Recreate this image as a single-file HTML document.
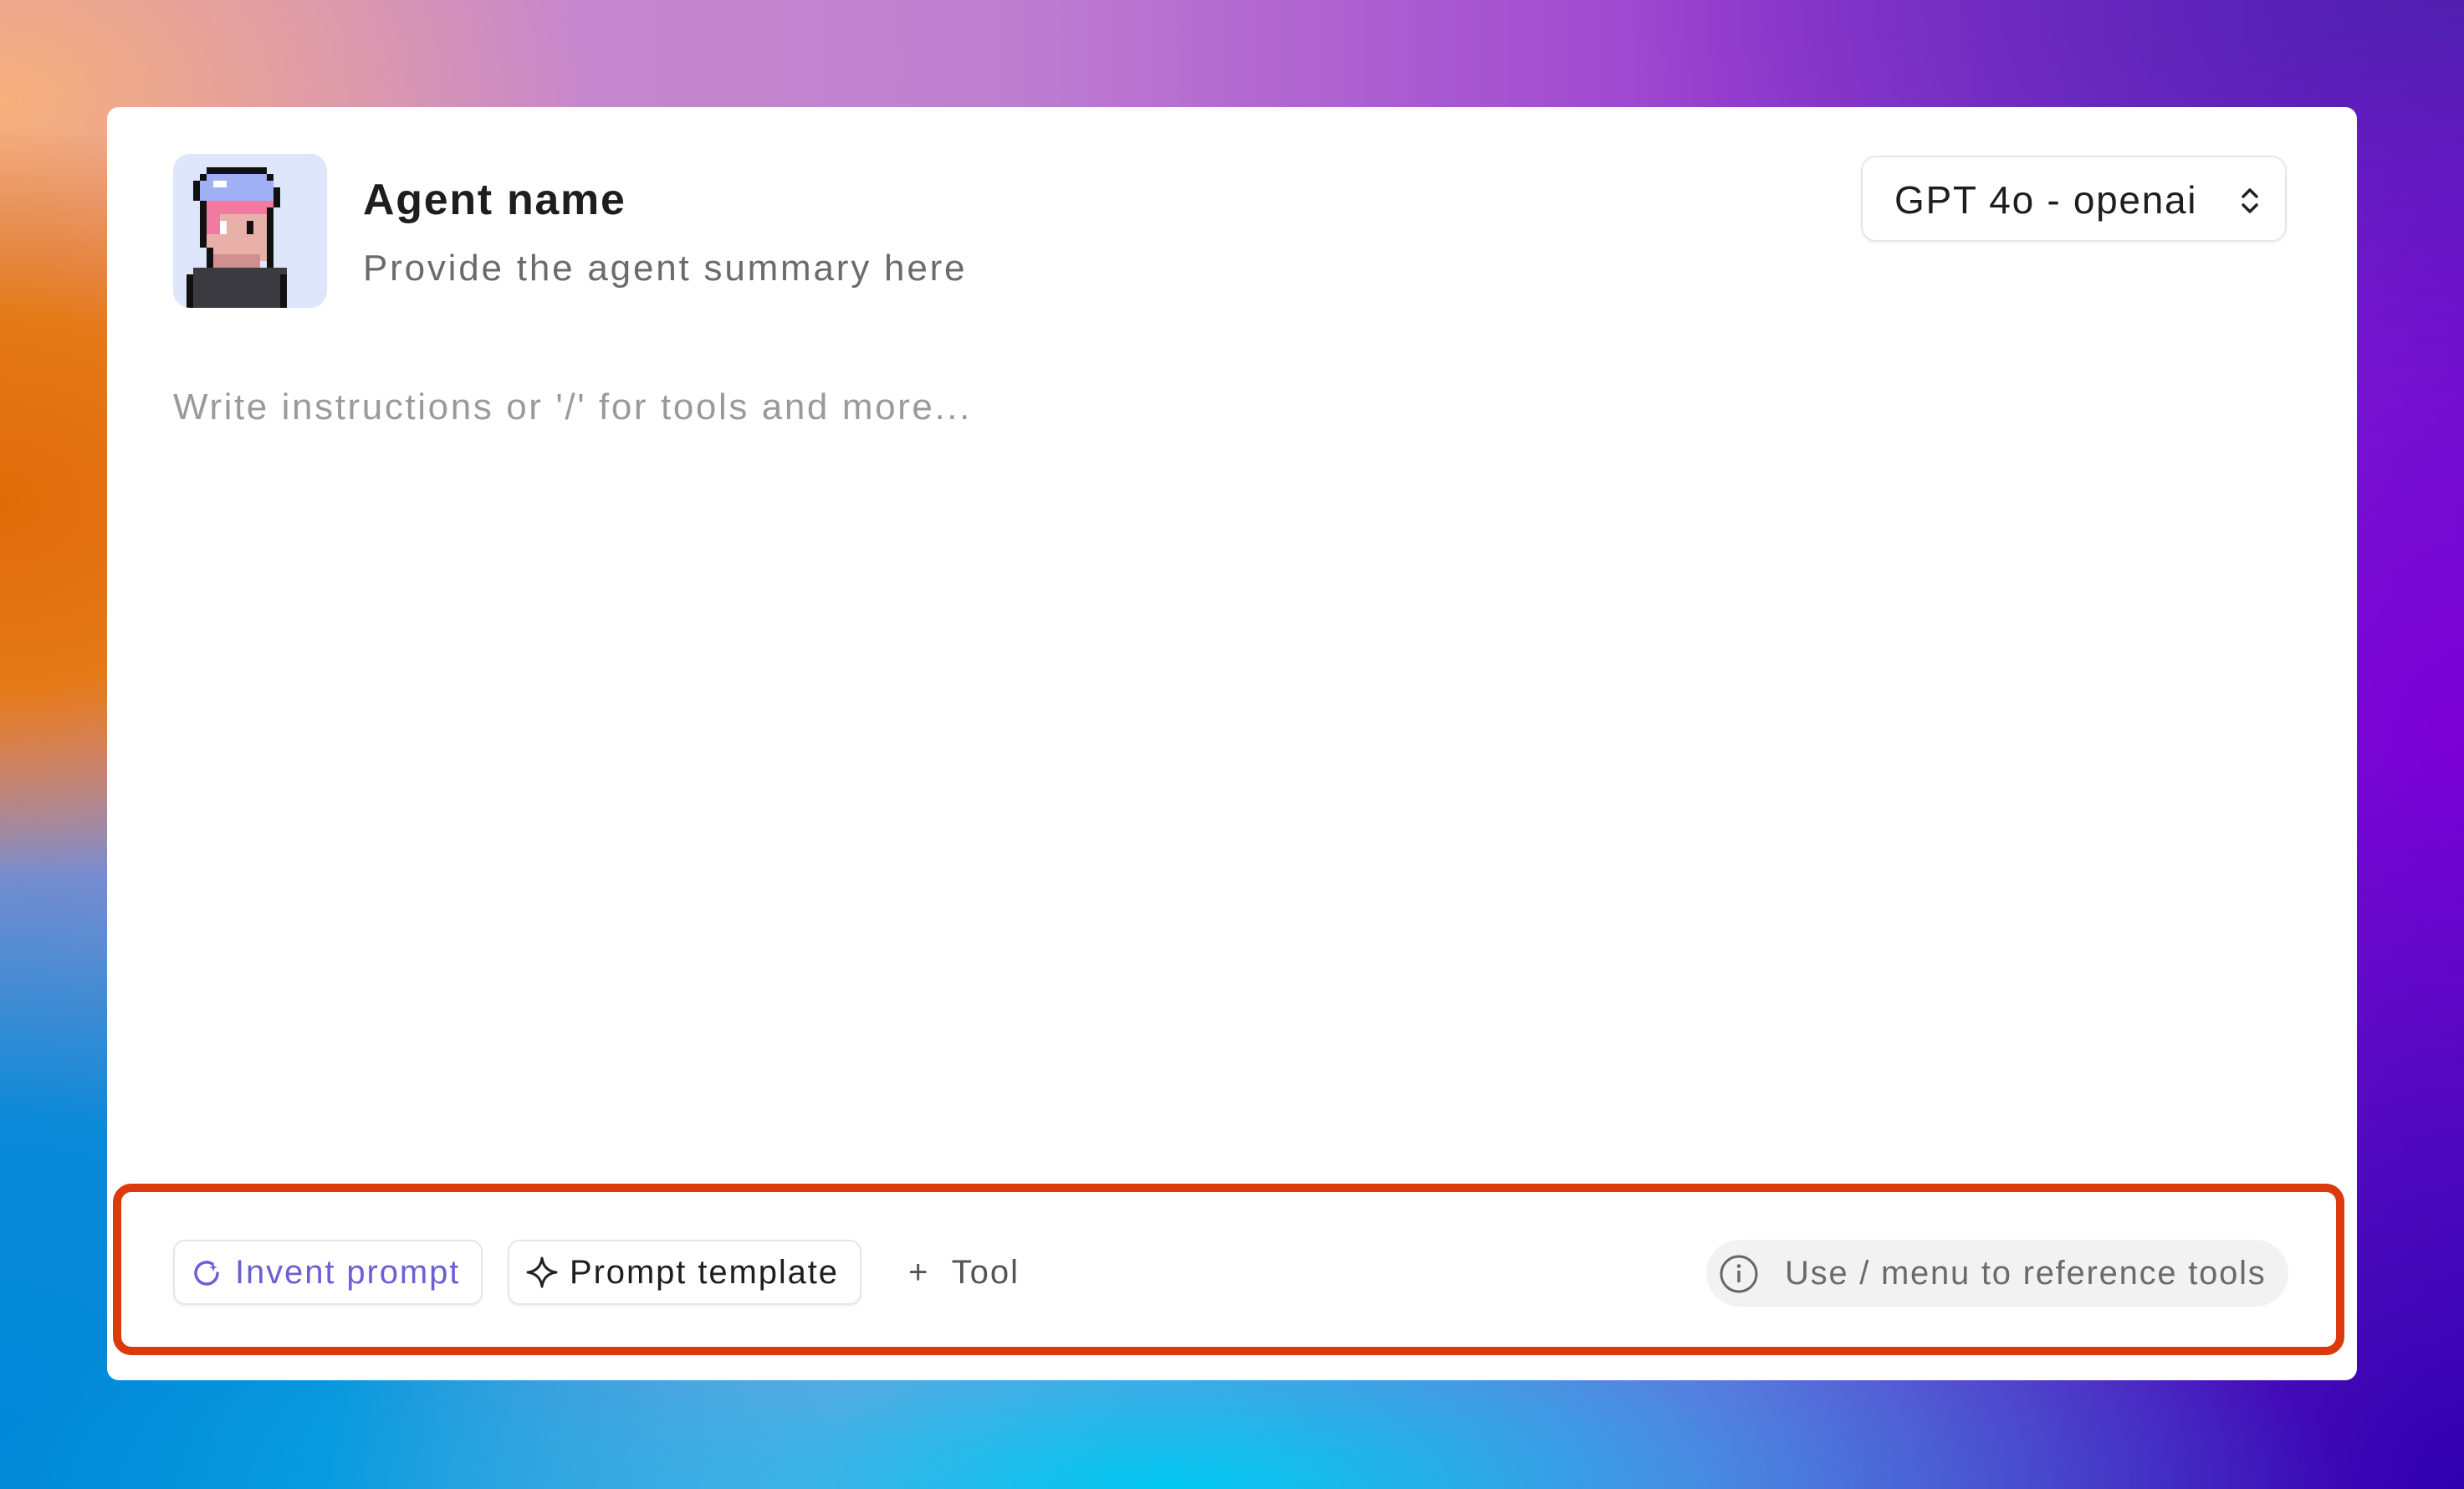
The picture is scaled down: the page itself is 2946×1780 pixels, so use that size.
<!DOCTYPE html>
<html><head><meta charset="utf-8"><style>
html,body{margin:0;padding:0}
body{width:2946px;height:1780px;position:relative;overflow:hidden;font-family:"Liberation Sans",sans-serif;
background:
radial-gradient(ellipse 600px 450px at 0px 600px,#e06a08 0%,#e57a18 50%,rgba(232,122,16,0) 100%),
radial-gradient(ellipse 700px 500px at 0px 120px,#f7b07a 0%,rgba(247,176,122,0) 100%),
radial-gradient(ellipse 1400px 400px at 1400px 1780px,#00c8f0 0%,rgba(0,200,240,0) 100%),
radial-gradient(ellipse 1000px 900px at 0px 1700px,#0088d8 0%,#0a8ad8 40%,rgba(0,136,216,0) 100%),
radial-gradient(ellipse 900px 900px at 2946px 1780px,#3000b0 0%,rgba(48,0,176,0) 100%),
radial-gradient(ellipse 700px 900px at 2946px 900px,#7c00d8 0%,rgba(124,0,216,0) 100%),
radial-gradient(ellipse 1000px 500px at 2946px 0px,#5020b0 0%,rgba(80,32,176,0) 100%),
linear-gradient(90deg,#d090c8 0%,#c080d0 40%,#9a40d0 70%,#6a20c8 100%);}
.card{position:absolute;left:128px;top:128px;width:2690px;height:1522px;background:#fff;border-radius:14px}
.av{position:absolute;left:207px;top:184px;width:184px;height:184px;background:#dde6fb;border-radius:20px;overflow:hidden}
.t1{position:absolute;left:434px;top:209px;font-size:52px;font-weight:bold;color:#1e1e1e;letter-spacing:1.7px}
.t2{position:absolute;left:434px;top:296px;font-size:44px;color:#6b6b6b;letter-spacing:2.8px}
.ph{position:absolute;left:207px;top:462px;font-size:44px;color:#9a9a9a;letter-spacing:2.6px}
.dd{position:absolute;left:2225px;top:186px;width:509px;height:103px;border:2px solid #e6e6e6;border-radius:18px;box-sizing:border-box;box-shadow:0 2px 3px rgba(0,0,0,.05)}
.dd span{position:absolute;left:38px;top:24px;font-size:46px;color:#1e1e1e;letter-spacing:1.7px}
.red{position:absolute;left:135px;top:1415px;width:2668px;height:205px;border:10px solid #dc3a0c;border-radius:22px;box-sizing:border-box}
.btn{position:absolute;top:1482px;height:78px;border:2px solid #e6e6e6;border-radius:14px;box-sizing:border-box;font-size:40px;line-height:74px;box-shadow:0 2px 3px rgba(0,0,0,.05);letter-spacing:1.9px}
.pill{position:absolute;left:2040px;top:1482px;width:696px;height:80px;background:#f2f2f2;border-radius:40px;font-size:40px;line-height:80px;color:#6b6b6b;letter-spacing:1.75px}
</style></head><body>
<div class="card"></div>
<div class="av"><svg width="184" height="184" viewBox="0 0 23 23" shape-rendering="crispEdges">
<rect x="5" y="2" width="9" height="1" fill="#111"/>
<rect x="4" y="3" width="1" height="1" fill="#111"/><rect x="14" y="3" width="1" height="2" fill="#111"/>
<rect x="3" y="4" width="1" height="3" fill="#111"/><rect x="15" y="5" width="1" height="3" fill="#111"/>
<rect x="5" y="3" width="9" height="3" fill="#9fb0f5"/><rect x="4" y="4" width="11" height="3" fill="#9fb0f5"/>
<rect x="6" y="4" width="2" height="1" fill="#fff"/>
<rect x="4" y="7" width="11" height="2" fill="#f07aa0"/>
<rect x="4" y="7" width="1" height="7" fill="#111"/><rect x="14" y="8" width="1" height="10" fill="#111"/>
<rect x="5" y="9" width="9" height="7" fill="#e8b0a8"/>
<rect x="5" y="9" width="2" height="3" fill="#f07aa0"/>
<rect x="7" y="10" width="1" height="2" fill="#fff"/><rect x="11" y="10" width="1" height="2" fill="#111"/>
<rect x="5" y="14" width="1" height="4" fill="#111"/>
<rect x="3" y="17" width="14" height="6" fill="#3a3a40"/>
<rect x="2" y="18" width="1" height="5" fill="#111"/><rect x="16" y="18" width="1" height="5" fill="#111"/>
<rect x="6" y="15" width="7" height="2" fill="#d09090"/>
</svg></div>
<div class="t1">Agent name</div>
<div class="t2">Provide the agent summary here</div>
<div class="ph">Write instructions or '/' for tools and more...</div>
<div class="dd"><span>GPT 4o - openai</span>
<svg style="position:absolute;left:448px;top:32px" width="30" height="40" viewBox="0 0 30 40"><path d="M7 15 L15 7 L23 15 M7 25 L15 33 L23 25" fill="none" stroke="#222" stroke-width="3.5" stroke-linecap="round" stroke-linejoin="round"/></svg></div>
<div class="red"></div>
<div class="btn" style="left:207px;width:370px;color:#6c5fd6">
<svg style="position:absolute;left:18px;top:18px" width="40" height="40" viewBox="0 0 40 40"><path d="M27 9 A13 13 0 1 0 33 20" fill="none" stroke="#6c5fd6" stroke-width="3.5" stroke-linecap="round"/><path d="M28 8 L29.5 12 L33 13 L29.5 14 L28 18 L26.5 14 L23 13 L26.5 12Z" fill="#6c5fd6"/></svg>
<span style="position:absolute;left:72px">Invent prompt</span></div>
<div class="btn" style="left:607px;width:423px;color:#1e1e1e">
<svg style="position:absolute;left:18px;top:16px" width="42" height="42" viewBox="0 0 42 42"><path d="M21 4 Q23 19 38 21 Q23 23 21 38 Q19 23 4 21 Q19 19 21 4Z" fill="none" stroke="#222" stroke-width="3" stroke-linejoin="round"/></svg>
<span style="position:absolute;left:72px">Prompt template</span></div>
<div style="position:absolute;left:1086px;top:1482px;font-size:40px;line-height:78px;color:#555;letter-spacing:2px">+ &nbsp;Tool</div>
<div class="pill">
<svg style="position:absolute;left:14px;top:16px" width="50" height="50" viewBox="0 0 50 50"><circle cx="25" cy="25" r="21" fill="none" stroke="#666" stroke-width="3"/><rect x="23.3" y="21" width="3.4" height="14" fill="#666"/><circle cx="25" cy="15.5" r="2.3" fill="#666"/></svg>
<span style="position:absolute;left:94px">Use / menu to reference tools</span></div>
</body></html>
